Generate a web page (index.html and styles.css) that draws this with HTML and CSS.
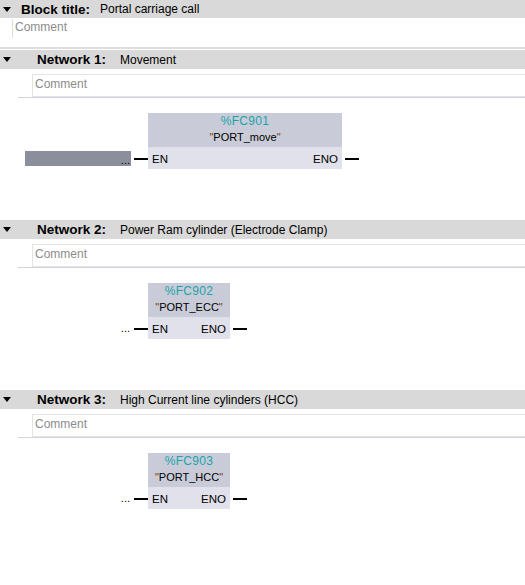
FILE: index.html
```html
<!DOCTYPE html>
<html>
<head>
<meta charset="utf-8">
<link rel="stylesheet" href="styles.css">
</head>
<body>
<div class="editor">
  <div class="bar block-bar">
    <svg class="tri" width="8" height="5" viewBox="0 0 8 5"><polygon points="0,0 8,0 4,5" fill="#000"/></svg>
    <span class="label block-label">Block title:</span>
    <span class="desc">Portal carriage call</span>
  </div>
  <div class="block-comment"><span class="comment-text">Comment</span></div>

  <section class="network">
    <div class="bar">
      <svg class="tri" width="8" height="5" viewBox="0 0 8 5"><polygon points="0,0 8,0 4,5" fill="#000"/></svg>
      <span class="label net-label">Network 1:</span>
      <span class="desc">Movement</span>
    </div>
    <div class="net-comment"><span class="comment-text">Comment</span></div>
    <div class="net-rule"></div>
    <div class="rung">
      <div class="in-side">
        <div class="in-box"><span class="dots">...</span></div>
        <div class="wire"></div>
      </div>
      <div class="fb wide">
        <div class="fb-head">
          <div class="fb-addr">%FC901</div>
          <div class="fb-name"><span class="q">"</span>PORT_move<span class="q">"</span></div>
        </div>
        <div class="fb-pins"><span>EN</span><span>ENO</span></div>
      </div>
      <div class="out-side"><div class="wire"></div></div>
    </div>
  </section>

  <section class="network">
    <div class="bar">
      <svg class="tri" width="8" height="5" viewBox="0 0 8 5"><polygon points="0,0 8,0 4,5" fill="#000"/></svg>
      <span class="label net-label">Network 2:</span>
      <span class="desc">Power Ram cylinder (Electrode Clamp)</span>
    </div>
    <div class="net-comment"><span class="comment-text">Comment</span></div>
    <div class="net-rule"></div>
    <div class="rung">
      <div class="in-side">
        <span class="dots plain">...</span>
        <div class="wire"></div>
      </div>
      <div class="fb narrow">
        <div class="fb-head">
          <div class="fb-addr">%FC902</div>
          <div class="fb-name"><span class="q">"</span>PORT_ECC<span class="q">"</span></div>
        </div>
        <div class="fb-pins"><span>EN</span><span>ENO</span></div>
      </div>
      <div class="out-side"><div class="wire"></div></div>
    </div>
  </section>

  <section class="network">
    <div class="bar">
      <svg class="tri" width="8" height="5" viewBox="0 0 8 5"><polygon points="0,0 8,0 4,5" fill="#000"/></svg>
      <span class="label net-label">Network 3:</span>
      <span class="desc">High Current line cylinders (HCC)</span>
    </div>
    <div class="net-comment"><span class="comment-text">Comment</span></div>
    <div class="net-rule"></div>
    <div class="rung">
      <div class="in-side">
        <span class="dots plain">...</span>
        <div class="wire"></div>
      </div>
      <div class="fb narrow">
        <div class="fb-head">
          <div class="fb-addr">%FC903</div>
          <div class="fb-name"><span class="q">"</span>PORT_HCC<span class="q">"</span></div>
        </div>
        <div class="fb-pins"><span>EN</span><span>ENO</span></div>
      </div>
      <div class="out-side"><div class="wire"></div></div>
    </div>
  </section>
</div>
</body>
</html>
```

FILE: styles.css
```css
* { box-sizing: border-box; }
html, body {
  margin: 0;
  padding: 0;
  background: #fff;
  font-family: "Liberation Sans", Arial, sans-serif;
  color: #000;
}
.editor {
  width: 525px;
  height: 585px;
  overflow: hidden;
}
.bar {
  height: 19px;
  background: #d9d9d9;
  display: flex;
  align-items: center;
}
.block-bar { height: 18px; }
.tri {
  margin-left: 3px;
  flex: none;
}
.label {
  font-weight: bold;
  font-size: 13.5px;
}
.block-label {
  margin-left: 10px;
  width: 79px;
}
.net-label {
  margin-left: 26px;
  width: 83px;
}
.desc {
  font-size: 12px;
}
.comment-text {
  font-size: 12px;
  color: #8c8c8c;
}
.block-comment {
  height: 31px;
  border-bottom: 2px solid #dedede;
  padding-top: 1px;
  padding-bottom: 10px;
}
.block-comment .comment-text {
  display: block;
  margin-left: 12px;
  padding-left: 2px;
  height: 19px;
  border-left: 1px solid #dcdcdc;
  line-height: 17px;
}
.network {
  height: 170px;
  padding-top: 1px;
}
.net-comment {
  margin-top: 5px;
  margin-left: 32px;
  height: 23px;
  border: 1px solid #e4e4e4;
  border-right: none;
  padding-left: 2px;
  line-height: 16px;
}
.net-rule {
  margin-left: 18px;
  height: 1px;
  background: #d3d3e6;
}
.rung {
  margin-top: 15px;
  display: flex;
  align-items: flex-end;
}
.in-side {
  width: 148px;
  height: 22px;
  display: flex;
  align-items: center;
  justify-content: flex-end;
  flex: none;
}
.in-box {
  width: 106px;
  height: 15px;
  background: #8a8f9b;
  margin-right: 3px;
  margin-top: 1px;
  display: flex;
  align-items: flex-end;
  justify-content: flex-end;
  padding-right: 1px;
}
.dots {
  font-size: 11px;
  line-height: 11px;
  color: #000;
}
.dots.plain {
  margin-right: 4px;
  line-height: 14px;
}
.wire {
  width: 14px;
  height: 2px;
  background: #000;
  margin-top: 1px;
}
.fb {
  flex: none;
  height: 56px;
  display: flex;
  flex-direction: column;
}
.fb.wide { width: 194px; }
.fb.narrow { width: 82px; }
.fb-head {
  height: 34px;
  background: #c9ccd8;
  text-align: center;
  padding-top: 1px;
}
.fb-addr {
  font-size: 12px;
  line-height: 14px;
  color: #1ba3ab;
  letter-spacing: 0.3px;
}
.fb-name {
  font-size: 11px;
  line-height: 19px;
}
.q { color: #7a3b12; }
.fb-pins {
  flex: 1;
  background: #e0e1ea;
  display: flex;
  align-items: center;
  justify-content: space-between;
  padding: 1px 4px 0 4px;
  font-size: 11.5px;
}
.out-side {
  height: 22px;
  display: flex;
  align-items: center;
  padding-left: 3px;
}
```
